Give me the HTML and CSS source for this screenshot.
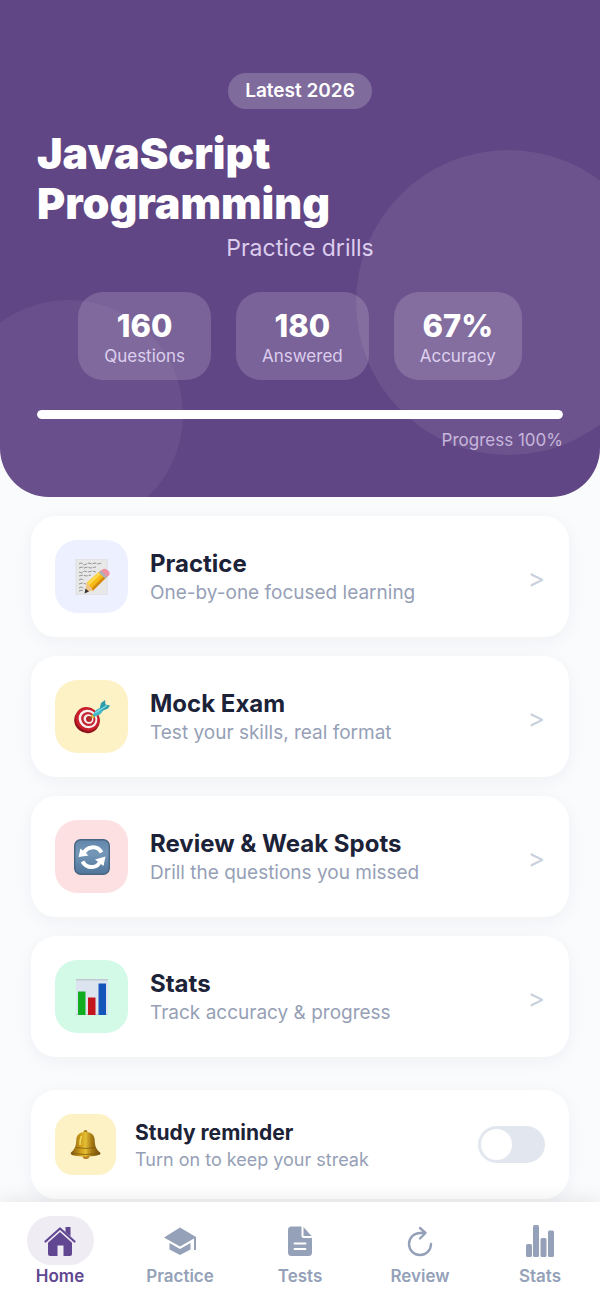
FILE: index.html
```html
<!DOCTYPE html>
<html lang="en">
<head>
    <meta charset="UTF-8">
    <meta name="viewport" content="width=device-width, initial-scale=1.0">
    <title>JavaScript Programming</title>
    <link rel="stylesheet" href="styles.css">
</head>
<body>
    <header class="hero">
        <span class="badge">Latest 2026</span>
        <h1>JavaScript Programming</h1>
        <p class="subtitle">Practice drills</p>
        <div class="stats">
            <div class="stat"><strong>160</strong><span>Questions</span></div>
            <div class="stat"><strong>180</strong><span>Answered</span></div>
            <div class="stat"><strong>67%</strong><span>Accuracy</span></div>
        </div>
        <div class="progress"><div class="progress-fill" style="width: 100%"></div></div>
        <p class="progress-text">Progress 100%</p>
    </header>

    <main class="menu">
        <a class="card" href="#practice">
            <span class="icon icon-blue">
                <svg viewBox="0 0 36 36" width="36" height="36">
                    <path d="M2 0h31v36H2z" fill="#e8e8e8" stroke="#d6d6d6" stroke-width=".6"/>
                    <path d="M5 5q2-2 4 0t3 0l3-1 3 1 3-1 3 1 4-1M5 9l3-1 2 1 4-1 2 1 6-1M5 13l3 1 2-2 4 1 4-1 4 1M5 17l4-1 3 1 5-1M5 21l2-1 3 1M5 25l3-1 4 1M5 29l2-1 3 1M5 32l4-1" fill="none" stroke="#8a8a8a" stroke-width=".9" stroke-dasharray="4 1"/>
                    <path d="M11.500 32l1.500-8.500L26.500 11.500l6.500 6-14 14z" fill="#f7b916"/>
                    <path d="M13 24L26.500 11.500l2.200 2L15 26.500z" fill="#ffd84a"/>
                    <path d="M17.500 29.500L31 16l2 1.700-14 14z" fill="#d48a0b"/>
                    <path d="M11.500 33l1.500-9 2 2.500 2 2 2 3z" fill="#efc58c"/>
                    <path d="M10.500 34.500l1-5 3.500 3z" fill="#3b3532"/>
                    <path d="M24.500 13.500l2.500-2.300 6.500 6-2.300 2.300z" fill="#a9b1b5"/>
                    <path d="M27 11.500q3-3 6.500-.5t1.200 5.500L33 18z" fill="#ef8fa0"/>
                </svg>
            </span>
            <span class="card-text">
                <span class="card-title">Practice</span>
                <span class="card-desc">One-by-one focused learning</span>
            </span>
            <span class="arrow">&gt;</span>
        </a>
        <a class="card" href="#exam">
            <span class="icon icon-yellow">
                <svg viewBox="0 0 36 36" width="36" height="36">
                    <ellipse cx="13" cy="21.500" rx="13" ry="12.500" transform="rotate(40 13 21.500)" fill="#8f1119"/>
                    <ellipse cx="13.500" cy="20" rx="12.500" ry="11.500" transform="rotate(40 13.500 20)" fill="#c91f2c"/>
                    <ellipse cx="14" cy="20" rx="9.700" ry="9" transform="rotate(40 14 20)" fill="#f8eeee"/>
                    <ellipse cx="14.300" cy="20" rx="7.400" ry="6.800" transform="rotate(40 14.300 20)" fill="#c52833"/>
                    <ellipse cx="14.500" cy="20" rx="5.100" ry="4.700" transform="rotate(40 14.500 20)" fill="#f8eeee"/>
                    <circle cx="15" cy="20" r="3" fill="#b8232d"/>
                    <path d="M15 20l5-4" stroke="#8a5a20" stroke-width="1.500"/>
                    <path d="M18 15l3 3-2 1.500-2-2z" fill="#e5b936"/>
                    <path d="M19 15.500l3-4.500 7-4 2 2.500-5 6-6 2.500z" fill="#45b8c8"/>
                    <path d="M26 8l1-4 4-3 .5 4.500 4.500 1-2 3-3.500 1.500-4 .5z" fill="#2f9cab"/>
                    <path d="M21 14L33 6.500" stroke="#7edbe3" stroke-width="1.300"/>
                </svg>
            </span>
            <span class="card-text">
                <span class="card-title">Mock Exam</span>
                <span class="card-desc">Test your skills, real format</span>
            </span>
            <span class="arrow">&gt;</span>
        </a>
        <a class="card" href="#review">
            <span class="icon icon-red">
                <svg viewBox="0 0 36 36" width="36" height="36">
                    <defs>
                        <linearGradient id="sync" x1="0" y1="0" x2="0" y2="1">
                            <stop offset="0" stop-color="#6286ac"/>
                            <stop offset=".4" stop-color="#7497b8"/>
                            <stop offset="1" stop-color="#4f7599"/>
                        </linearGradient>
                    </defs>
                    <rect x=".7" y=".7" width="34.600" height="34.600" rx="6" fill="url(#sync)" stroke="#486582" stroke-width="1.400"/>
                    <path d="M9.500 15C12 7.500 23 5.500 27.500 13.500" fill="none" stroke="#fff" stroke-width="4"/>
                    <path d="M6.500 9.500L4.500 18l10-1.500z" fill="#fff"/>
                    <path d="M26.500 21.500C24 29.500 13 30.500 8.500 22.500" fill="none" stroke="#fff" stroke-width="4"/>
                    <path d="M31.500 17.500L21 20.500l8.500 6.500z" fill="#fff"/>
                </svg>
            </span>
            <span class="card-text">
                <span class="card-title">Review &amp; Weak Spots</span>
                <span class="card-desc">Drill the questions you missed</span>
            </span>
            <span class="arrow">&gt;</span>
        </a>
        <a class="card" href="#stats">
            <span class="icon icon-green">
                <svg viewBox="0 0 36 36" width="36" height="36">
                    <path d="M2 0h32v36H2z" fill="#dce5ef"/>
                    <path d="M2 0h32v1.500H2zM2 35h32v1H2z" fill="#bfc9d0"/>
                    <path d="M4 12.500h7.500V36H4z" fill="#11ad20"/>
                    <path d="M14 18.500h7.500V36H14z" fill="#c3131b"/>
                    <path d="M24.500 4.500H32V36h-7.500z" fill="#1455bb"/>
                </svg>
            </span>
            <span class="card-text">
                <span class="card-title">Stats</span>
                <span class="card-desc">Track accuracy &amp; progress</span>
            </span>
            <span class="arrow">&gt;</span>
        </a>

        <div class="card reminder">
            <span class="icon icon-yellow icon-small">
                <svg viewBox="0 0 31 31" width="31" height="31">
                    <defs>
                        <linearGradient id="bell" x1="0" y1="0" x2="1" y2="0">
                            <stop offset="0" stop-color="#7c570e"/>
                            <stop offset=".35" stop-color="#d3a21b"/>
                            <stop offset=".5" stop-color="#e3be35"/>
                            <stop offset=".7" stop-color="#a87a12"/>
                            <stop offset="1" stop-color="#694a0c"/>
                        </linearGradient>
                    </defs>
                    <circle cx="15.500" cy="3" r="2" fill="#a97c17"/>
                    <circle cx="16" cy="26.500" r="3.500" fill="#b8791d"/>
                    <path d="M15.500 3c6 0 9 3 9.200 8 .2 6 1.300 9 5.300 12.500 1.500 2-1 2.500-3 3-7 1.500-16 1.500-23 0C2 26 0 25.500 1 23.500 5 20 6 17 6.300 11c.2-5 3.200-8 9.200-8z" fill="url(#bell)"/>
                    <path d="M6 18.500q9.500 2 19 0M2 24.500q13.500 2 27 0" fill="none" stroke="#7d590c" stroke-width=".8"/>
                    <path d="M11.500 7q-1.500 3-1.500 9" fill="none" stroke="#f0d862" stroke-width="1.500"/>
                </svg>
            </span>
            <label class="card-text" for="reminder">
                <span class="card-title">Study reminder</span>
                <span class="card-desc">Turn on to keep your streak</span>
            </label>
            <input class="switch" type="checkbox" id="reminder">
        </div>
    </main>

    <nav class="tabbar">
        <a class="tab active" href="#home">
            <span class="tab-icon">
                <svg viewBox="0 0 32 32" width="32" height="32" fill="currentColor">
                    <path d="M1.500 16.500L16 3.500l14.500 13" fill="none" stroke="currentColor" stroke-width="2.200" stroke-linecap="round" stroke-linejoin="round"/>
                    <path d="M21.500 2h5v9.500l-5-4.500z"/>
                    <path d="M16 7l12 10.700V29a2 2 0 0 1-2 2h-6.500V20.500h-6V31H6a2 2 0 0 1-2-2V17.700z"/>
                </svg>
            </span>
            Home
        </a>
        <a class="tab" href="#practice">
            <span class="tab-icon">
                <svg viewBox="0 0 32 32" width="32" height="32" fill="currentColor">
                    <path d="M16 2.500L32 12v13h-2V13.500L16 21.500 0 12.500z"/>
                    <path d="M5.500 18L16 24l10.500-6v6.500L16 30 5.500 24.500z"/>
                </svg>
            </span>
            Practice
        </a>
        <a class="tab" href="#tests">
            <span class="tab-icon">
                <svg viewBox="0 0 32 32" width="32" height="32" fill="currentColor">
                    <path d="M7.500 1.500h10V11a2 2 0 0 0 2 2H28v14.500a3.500 3.500 0 0 1-3.500 3.500h-17A3.500 3.500 0 0 1 4 27.500V5a3.500 3.500 0 0 1 3.500-3.500z"/>
                    <path d="M19.500 2L27.500 11h-8z"/>
                    <path d="M10.500 18.500h11M10.500 24h11" stroke="#fff" stroke-width="1.800" stroke-linecap="round"/>
                </svg>
            </span>
            Tests
        </a>
        <a class="tab" href="#review">
            <span class="tab-icon">
                <svg viewBox="0 0 32 32" width="32" height="32" fill="none" stroke="currentColor" stroke-width="2.400" stroke-linecap="round" stroke-linejoin="round">
                    <path d="M27 19A11 11 0 1 1 16 8h5M16 3l5.500 5-5.500 5.500"/>
                </svg>
            </span>
            Review
        </a>
        <a class="tab" href="#stats">
            <span class="tab-icon">
                <svg viewBox="0 0 32 32" width="32" height="32" fill="currentColor">
                    <rect x="2" y="19" width="6" height="13" rx="1.500"/>
                    <rect x="9" y="0" width="6" height="32" rx="1.500"/>
                    <rect x="16.500" y="13" width="6" height="19" rx="1.500"/>
                    <rect x="24" y="5.500" width="6" height="26.500" rx="1.500"/>
                </svg>
            </span>
            Stats
        </a>
    </nav>
</body>
</html>
```
FILE: styles.css
```css
* {
    box-sizing: border-box;
}
body {
    font-family: Inter, "Liberation Sans", sans-serif;
    margin: 0;
    display: flex;
    flex-direction: column;
    min-height: 100vh;
    background: #f9fbfd;
    color: #1c2237;
}
a {
    color: inherit;
    text-decoration: none;
}
.hero {
    position: relative;
    overflow: hidden;
    display: flex;
    flex-direction: column;
    align-items: center;
    padding: 73px 37px 46px;
    background: #614685;
    border-radius: 0 0 49px 49px;
    color: #fff;
}
.hero::before, .hero::after {
    content: "";
    position: absolute;
    border-radius: 50%;
}
.hero::before {
    width: 305px;
    height: 305px;
    right: -61px;
    bottom: 42px;
    background: rgba(255, 255, 255, 0.07);
}
.hero::after {
    width: 229px;
    height: 229px;
    left: -46px;
    bottom: -32px;
    background: rgba(255, 255, 255, 0.05);
}
.badge {
    padding: 6px 17px;
    border-radius: 18px;
    background: rgba(255, 255, 255, 0.2);
    font-size: 19px;
    line-height: 24px;
    font-weight: 600;
}
.hero h1 {
    width: 100%;
    margin: 19px 0 0;
    font-size: 43px;
    line-height: 50px;
    font-weight: 900;
}
.subtitle {
    margin: 5px 0 0;
    font-size: 23px;
    line-height: 30px;
    color: #dccdee;
}
.stats {
    display: flex;
    gap: 25px;
    margin-top: 29px;
}
.stat {
    display: flex;
    flex-direction: column;
    align-items: center;
    padding: 15px 26px 12px;
    border-radius: 25px;
    background: rgba(255, 255, 255, 0.16);
}
.stat strong {
    font-size: 31px;
    line-height: 37px;
    font-weight: 800;
}
.stat span {
    font-size: 17px;
    line-height: 24px;
    color: #dccdee;
}
.progress {
    width: 100%;
    height: 9px;
    margin-top: 30px;
    border-radius: 5px;
    background: rgba(255, 255, 255, 0.2);
    overflow: hidden;
}
.progress-fill {
    height: 100%;
    border-radius: 5px;
    background: #fff;
}
.progress-text {
    align-self: flex-end;
    margin: 10px 0 0;
    font-size: 17px;
    line-height: 22px;
    color: #c4b2da;
}
.menu {
    flex: 1;
    display: flex;
    flex-direction: column;
    gap: 19px;
    padding: 19px 31px 3px;
}
.card {
    display: flex;
    align-items: center;
    gap: 22px;
    padding: 24px;
    border-radius: 25px;
    background: #fff;
    box-shadow: 0 4px 18px rgba(30, 41, 59, 0.05);
}
.icon {
    display: flex;
    align-items: center;
    justify-content: center;
    flex-shrink: 0;
    width: 73px;
    height: 73px;
    border-radius: 22px;
}
.icon-small {
    width: 61px;
    height: 61px;
    border-radius: 18px;
}
.icon-blue {
    background: #ecf0ff;
}
.icon-yellow {
    background: #fdf1c6;
}
.icon-red {
    background: #fde1e2;
}
.icon-green {
    background: #d2fae6;
}
.card-text {
    flex: 1;
    display: flex;
    flex-direction: column;
    padding-top: 3px;
}
.card-title {
    font-size: 24px;
    line-height: 30px;
    font-weight: 700;
}
.card-desc {
    font-size: 19px;
    line-height: 28px;
    color: #969fb6;
}
.arrow {
    padding-top: 3px;
    font-size: 26px;
    color: #c9d1dd;
}
.reminder {
    gap: 19px;
    margin-top: 14px;
}
.reminder .card-title {
    font-size: 21px;
    line-height: 28px;
}
.reminder .card-desc {
    font-size: 18px;
    line-height: 26px;
}
.switch {
    appearance: none;
    display: flex;
    width: 67px;
    height: 37px;
    margin: 0;
    padding: 3px;
    border-radius: 19px;
    background: #e2e7ef;
    cursor: pointer;
}
.switch::before {
    content: "";
    width: 31px;
    height: 31px;
    border-radius: 50%;
    background: #fff;
}
.switch:checked {
    justify-content: flex-end;
    background: #614685;
}
.tabbar {
    position: sticky;
    bottom: 0;
    display: flex;
    padding: 14px 0 13px;
    background: #fff;
    box-shadow: 0 -3px 18px rgba(0, 0, 0, 0.08);
}
.tab {
    flex: 1;
    display: flex;
    flex-direction: column;
    align-items: center;
    font-size: 17px;
    line-height: 22px;
    font-weight: 600;
    color: #94a1b8;
}
.tab-icon {
    display: flex;
    align-items: center;
    justify-content: center;
    width: 67px;
    height: 49px;
    border-radius: 25px;
}
.tab.active {
    color: #614791;
}
.tab.active .tab-icon {
    background: #f0ecf4;
}
```
